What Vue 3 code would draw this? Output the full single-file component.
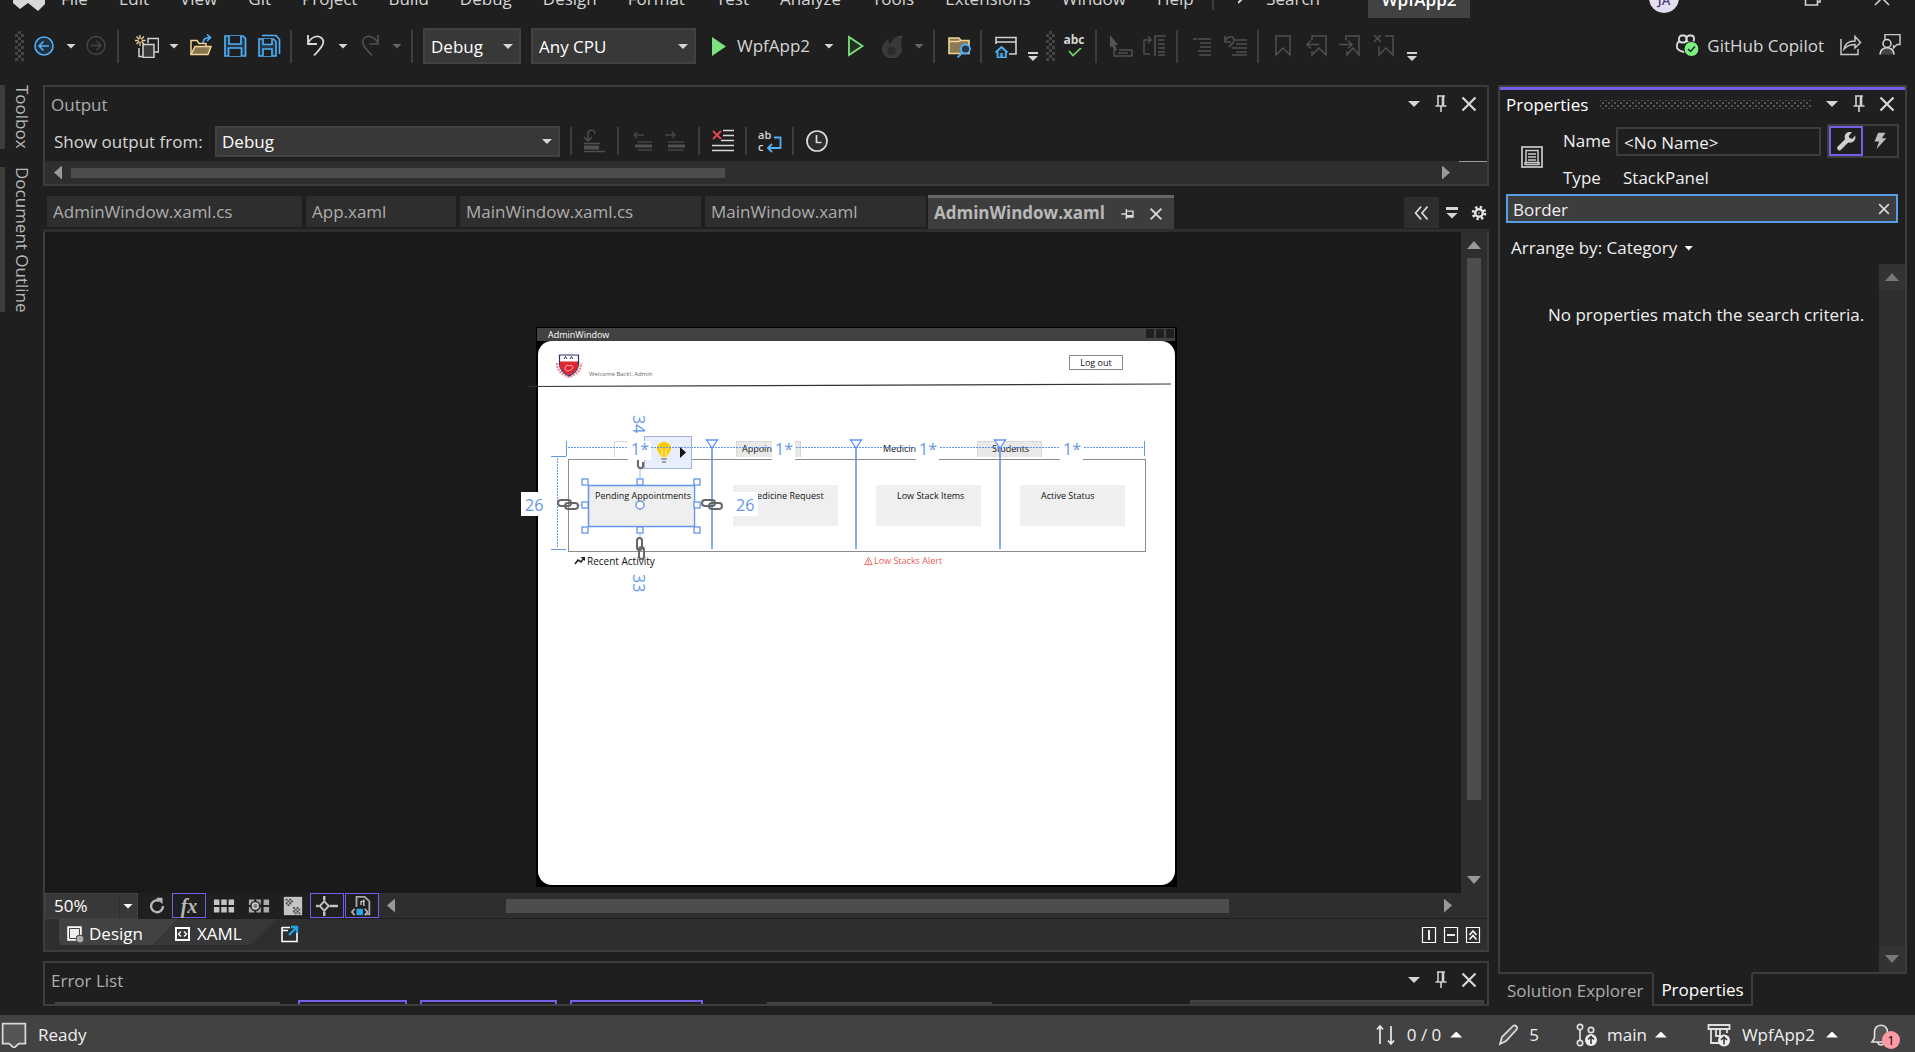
<script setup>
import { ref } from 'vue'

const menus = ['File', 'Edit', 'View', 'Git', 'Project', 'Build', 'Debug', 'Design', 'Format', 'Test', 'Analyze', 'Tools', 'Extensions', 'Window', 'Help']
const configuration = ref('Debug')
const platform = ref('Any CPU')
const outputSource = ref('Debug')
const zoomLevel = ref('50%')
const elementName = ref('<No Name>')
const propertySearch = ref('Border')

const icons = {
  back: '<g fill="none" stroke="#4fb0f8" stroke-width="1.6"><circle cx="12" cy="12" r="9" fill="#20303c"/><path d="M17 12H7.500M11.500 7.500L7 12l4.500 4.500"/></g>',
  forward: '<g fill="none" stroke="#464646" stroke-width="1.400"><circle cx="12" cy="11.500" r="9"/><path d="M7 11.500h9.500M12.500 7L17 11.500 12.500 16"/></g>',
  create: '<g fill="none" stroke="#d2d2d2" stroke-width="1.500"><path d="M13 9V4.500h10.500V18H19"/><path d="M4 14v8.500h3.500"/><rect x="8" y="10.500" width="11" height="13" fill="#3a3a3a"/></g><path d="M5 1v11M0 6.500h10.500M1.500 2.500l7.500 7.500M9 2.500L1.500 10" stroke="#f3d592" stroke-width="1.300"/><circle cx="5.200" cy="6.300" r="1.600" fill="#1f1f1f"/>',
  open: '<g fill="none" stroke="#f3d592" stroke-width="1.500"><path d="M2 20V6.500h6l2 3h7v4"/><path d="M2 20.500l4-8h16l-3 8z" fill="#877650"/></g><path d="M14 9c0-4 3-5.500 7-5.500M18 .500l3.500 3-3.500 3.500" fill="none" stroke="#4fb0f8" stroke-width="1.600"/>',
  save: '<g fill="none" stroke="#4fb0f8" stroke-width="1.700"><path d="M2 2h18l2.500 2.500V22H2z" fill="#243845"/><path d="M6 2v8h12V2M5.500 22v-8h13v8" fill="#1f1f1f"/></g>',
  saveAll: '<g fill="none" stroke="#4fb0f8" stroke-width="1.600"><path d="M5 1.500h14l3.500 4V20"/><path d="M2 5h14.500L19 7.500V22H2z" fill="#243845"/><path d="M6 5v5.500h9V5M6 22v-7h9v7" fill="#1f1f1f"/></g>',
  undo: '<path d="M4 1v9h9M4 9c4-7 10-8 13.500-5C22 8 18 13 10 21.500" fill="none" stroke="#d8d8d8" stroke-width="1.800"/>',
  redo: '<path d="M20 1v9h-9M20 9c-4-7-10-8-13.500-5C2 8 6 13 14 21.500" fill="none" stroke="#505050" stroke-width="1.600"/>',
  play: '<path d="M4 3l14 9.500L4 22z" fill="#7ce27c"/>',
  playOutline: '<path d="M5 3l13.500 9L5 21z" fill="#233323" stroke="#7ce27c" stroke-width="1.800"/>',
  flame: '<path d="M22 2C13 3 12 8 11 11 8 10 8 8 8 6 4 9 2 13 3 17c1 5 5 7 9 7 6 0 10-5 9-10 0-4-2-6 1-12z" fill="#383838" stroke="#444" stroke-width="1"/><circle cx="11.500" cy="17" r="4" fill="#2b2b2b"/>',
  folderSearch: '<path d="M2 19.500V4h10l2 2.500h8V19.500z" fill="#8a7a55" stroke="#f3d592" stroke-width="1.600"/><path d="M2 7.500h10l2-1.500" stroke="#f3d592" stroke-width="1.500" fill="none"/><circle cx="18.500" cy="15" r="4.500" fill="#243845" stroke="#4fb0f8" stroke-width="1.800"/><path d="M15.500 18.500l-5 5" stroke="#4fb0f8" stroke-width="1.800"/>',
  home: '<path d="M2 10V3.500h20V20h-7M2 8h20" fill="none" stroke="#d2d2d2" stroke-width="1.600"/><path d="M1.500 18.500l6-5.500 6 5.500M3.500 17v6.500h8.500V17" fill="#243845" stroke="#4fb0f8" stroke-width="1.700"/><path d="M7.500 23.500v-4.500" stroke="#4fb0f8" stroke-width="2"/>',
  check: '<path d="M7 3l4 4.500L19 0" fill="none" stroke="#6fd86f" stroke-width="1.700"/>',
  cursorBox: '<path d="M1 1l8 10H6l2 5-2 1-3-5-2 2z" fill="#555"/><path d="M5 15v7h18v-6H10M9 19h10" fill="none" stroke="#505050" stroke-width="1.500"/>',
  docArrow: '<path d="M7 20H1V6h6M5 2.500L8 6 5 9" fill="none" stroke="#505050" stroke-width="1.400"/><path d="M12 22V2h11M15 6h6M15 10h7M15 14h7M15 18h7M15 21h7" fill="none" stroke="#505050" stroke-width="1.600"/>',
  indent: '<path d="M3 5h4M8 5h13M10 9h11M10 13h11M8 17h13M9 21h12" stroke="#505050" stroke-width="1.600"/>',
  outdent: '<path d="M11 6h12M12 10h11M8 14h15M12 18h11M8 21h15" stroke="#505050" stroke-width="1.600"/><path d="M1 2v6h6M1 7c3-6 9-5 9-1s-4 5-5 7" fill="none" stroke="#505050" stroke-width="1.500"/>',
  bookmark: '<path d="M5 2h14v19l-7-7-7 7z" fill="none" stroke="#505050" stroke-width="1.500"/>',
  bookmarkPrev: '<path d="M7 6V2h14v19l-7-7-7 7v-4M14 10.500H2M6 6.500l-4 4 4 4" fill="none" stroke="#505050" stroke-width="1.500"/>',
  bookmarkNext: '<path d="M7 6V2h13v19l-6-7-6 7v-4M0 10.500h13M9 6.500l4 4-4 4" fill="none" stroke="#505050" stroke-width="1.500"/>',
  bookmarkClear: '<path d="M12 2h8v19l-7-7-7 7v-9M1 1l7 7M8 1L1 8" fill="none" stroke="#505050" stroke-width="1.500"/>',
  copilot: '<g fill="none" stroke="#dcdcdc" stroke-width="1.800"><rect x="4" y="1.500" width="7.500" height="7" rx="3"/><rect x="11.500" y="1.500" width="7.500" height="7" rx="3"/><path d="M4 7c-3 3-2 4-2 7 2 3 5 4 9 4"/></g><circle cx="16.500" cy="15" r="7.500" fill="#7df07d" stroke="#111" stroke-width="1"/><path d="M13 15l2.500 2.500 4.500-5" fill="none" stroke="#123" stroke-width="1.500"/>',
  share: '<path d="M2 5v15.500h17V15M5 15c1-6 5-8 11-8V2.500l5.500 6L16 14v-3.500c-5 0-8 1-11 4.500z" fill="none" stroke="#c8c8c8" stroke-width="1.500"/>',
  person: '<path d="M7 6V.500h15v10h-3l-3.500 3.500v-3" fill="none" stroke="#c8c8c8" stroke-width="1.500"/><circle cx="9" cy="9.500" r="4" fill="none" stroke="#dcdcdc" stroke-width="1.500"/><path d="M2 20.500c0-9 14-9 14 0" fill="#444" stroke="#dcdcdc" stroke-width="1.600"/>',
  goto: '<path d="M5 11V4c1-4 7-4 7 1M1 8l4 4 4-4" fill="none" stroke="#505050" stroke-width="1.400"/><path d="M1 14.500h16M1 22.500h21" stroke="#505050" stroke-width="1.400"/><rect x="1" y="16.500" width="15" height="4" fill="#505050"/>',
  prevMsg: '<path d="M14 6H4M7 3L4 6l3 3M8 13h14M8 21h14" fill="none" stroke="#454545" stroke-width="1.500"/><path d="M5 17h17" stroke="#505050" stroke-width="3"/>',
  nextMsg: '<path d="M1 6h10M8 3l3 3-3 3M4 13h16M4 21h16" fill="none" stroke="#454545" stroke-width="1.500"/><path d="M4 17h17" stroke="#505050" stroke-width="3"/>',
  clear: '<path d="M2 2l8 8M10 2l-8 8" stroke="#e5484d" stroke-width="1.800"/><path d="M12 1.500h11M12 6.500h11M10 11.500h13M1 16.500h22M1 21.500h22" stroke="#d8d8d8" stroke-width="1.600"/>',
  wrap: '<path d="M16 8.500h6.500V19H10M14 15l-4 4 4 4" fill="none" stroke="#4fb0f8" stroke-width="1.800"/>',
  clock: '<circle cx="12" cy="12" r="10" fill="#2d2d2d" stroke="#dcdcdc" stroke-width="1.700"/><path d="M11.500 6v7.500h5" fill="none" stroke="#dcdcdc" stroke-width="1.700"/>',
  pin: '<path d="M8 4h8M9 4v10M14.500 4v10M6.500 14h11M12 14v6M13.500 4v10" fill="none" stroke="#d0d0d0" stroke-width="1.600"/>',
  pinSide: '<path d="M4 12h6M10 6v12M10 8.500h8v7h-8M10 14h8" fill="none" stroke="#d8d8d8" stroke-width="1.700"/>',
  close: '<path d="M5.500 5.500l13 13M18.500 5.500l-13 13" stroke="#d8d8d8" stroke-width="2.200"/>',
  chevrons: '<path d="M11 5l-6 7 6 7M18 5l-6 7 6 7" fill="none" stroke="#d8d8d8" stroke-width="1.900"/>',
  gear: '<circle cx="12" cy="12" r="4.500" fill="none" stroke="#e0e0e0" stroke-width="3"/><circle cx="12" cy="12" r="7" fill="none" stroke="#e0e0e0" stroke-width="3.500" stroke-dasharray="2.800 2.700"/><circle cx="12" cy="12" r="1" fill="#e0e0e0"/>',
  refresh: '<path d="M15 6.500A6.500 6.500 0 1 0 18.500 12" fill="none" stroke="#b8b8b8" stroke-width="2.600"/><path d="M11 3h7v7z" fill="#b8b8b8"/>',
  grid: '<path d="M1 5h6v6H1zM9 5h6v6H9zM17 5h6v6h-6zM1 13h6v6H1zM9 13h6v6H9zM17 13h6v6h-6z" fill="#c4c4c4"/>',
  snap: '<path d="M1 5h6v6H1zM9 5h5v6H9zM17 5h6v6h-6zM1 13h6v6H1zM9 13h5v6H9zM17 13h6v6h-6z" fill="#aaa"/><circle cx="8" cy="12" r="5" fill="#777" stroke="#222" stroke-width="1.500"/><circle cx="8" cy="12" r="3" fill="none" stroke="#ccc" stroke-width="1.500"/>',
  checker: '<path d="M2 2h20v20H2z" fill="#c4c4c4"/><path d="M4 4h2v2H4zM8 4h2v2H8zM6 6h2v2H6zM4 8h2v2H4zM8 8h2v2H8zM10 6h2v2h-2zM6 10h2v2H6zM12 13h2v2h-2zM16 13h2v2h-2zM14 15h2v2h-2zM18 15h2v2h-2zM12 17h2v2h-2zM16 17h2v2h-2zM14 19h2v2h-2zM18 19h2v2h-2z" fill="#444"/>',
  snapLine: '<path d="M9 1v5M9 18v5M0 12h3M15 12h9" stroke="#c4c4c4" stroke-width="2.600"/><path d="M9 7l5 5-5 5-5-5z" fill="#222" stroke="#c4c4c4" stroke-width="2"/>',
  docSnap: '<path d="M6 13V2h9l5 5v14h-3" fill="none" stroke="#aaa" stroke-width="2"/><path d="M11 11V7h4M14 5v7" fill="none" stroke="#ccc" stroke-width="1.500"/><path d="M6 15h7v7H6z" fill="#2ba7e8"/><path d="M4 15l-3 3.500L4 22M15 15l3 3.500-3 3.500" fill="none" stroke="#bbb" stroke-width="1.800"/>',
  design: '<path d="M5 5h13v13H5z" fill="#eee" stroke="#fff" stroke-width="1.500"/><path d="M6.500 6.500h10v10h-10z" fill="none" stroke="#424242"/><circle cx="17" cy="17" r="4" fill="#aaa" stroke="#424242"/>',
  xaml: '<path d="M5 6h13v12H5z" fill="none" stroke="#fff" stroke-width="2"/><path d="M10 9.500L7.500 12l2.500 2.500M13 9.500l2.500 2.500-2.500 2.500" fill="none" stroke="#fff" stroke-width="1.300"/>',
  popout: '<path d="M4 5v14.500h15V11M4 5.500h8M4 8.500h6" fill="none" stroke="#fff" stroke-width="1.600"/><path d="M11 13l7-7M13 5h6v6" fill="none" stroke="#1fa3e8" stroke-width="2.400"/>',
  splitV: '<path d="M5.500 4.500h13v15h-13z" fill="none" stroke="#fff" stroke-width="1.200"/><path d="M12 7v10" stroke="#fff" stroke-width="1.800"/>',
  splitH: '<path d="M5.500 4.500h13v15h-13z" fill="none" stroke="#fff" stroke-width="1.200"/><path d="M8 12h8" stroke="#fff" stroke-width="1.800"/>',
  collapse: '<path d="M5.500 4.500h13v15h-13z" fill="none" stroke="#fff" stroke-width="1.200"/><path d="M8.500 12L12 8l3.500 4M8.500 16.500l3.500-4 3.500 4" fill="none" stroke="#fff" stroke-width="1.600"/>',
  stack: '<path d="M2 2h20v20H2z" fill="none" stroke="#b0b0b0" stroke-width="2"/><path d="M6 5.500h12v12H6zM8 9h8M8 12h8M8 15h8M5 19.500h14M5 17v3M19 17v3" fill="none" stroke="#c8c8c8" stroke-width="1.500"/>',
  wrench: '<path d="M3 18L11 10C9 4 14 1 18.500 2.500l-3.500 4 1 2.500 3 .500 3-3.500c1.500 5-3 9-7.500 7.500L6 22c-2 1.500-5-2-3-4z" fill="#cfcfcf"/>',
  bolt: '<path d="M10 3h8l-4 6h5L8 21l3-8.500H6z" fill="#bdbdbd"/>',
  message: '<path d="M1.500 1.500h21V20h-6l-4.500 4-4.500-4h-6z" fill="#555" stroke="#d8d8d8" stroke-width="1.600"/>',
  arrows: '<path d="M6 21V3M3 6.500L6 3l3 3.500M17 3v18M14 17.500l3 3.500 3-3.500" fill="none" stroke="#e8e8e8" stroke-width="1.700"/>',
  pencil: '<path d="M4 21l2-7L17 3c2-2 5 1 4 3L10 18z" fill="#555" stroke="#e0e0e0" stroke-width="1.700"/>',
  branch: '<g fill="none" stroke="#e0e0e0" stroke-width="1.700"><circle cx="5" cy="4" r="2.700"/><circle cx="5" cy="20" r="2.700"/><path d="M5 7v10"/><circle cx="16" cy="7" r="2.700"/></g><circle cx="16" cy="17" r="6" fill="#eee"/><path d="M16 21v-7M13 16.500l3-3 3 3" fill="none" stroke="#333" stroke-width="1.500"/>',
  repo: '<path d="M1.500 2h21v4h-21zM4 6v14h8M20 6v4M9 6v7h4V6" fill="none" stroke="#e0e0e0" stroke-width="1.800"/><circle cx="17" cy="17.500" r="6" fill="#eee"/><path d="M17 21.500v-7M14 17l3-3 3 3" fill="none" stroke="#333" stroke-width="1.500"/>',
  bell: '<path d="M3 19l2.500-4V9c0-9 13-9 13 0v6l2.500 4zM9 19c0 4 6 4 6 0" fill="#555" stroke="#e0e0e0" stroke-width="1.600"/>',
  vs: '<path d="M0 8l6-3 9 8 10-10 7 4v16l-7 7-10-8-8 6-7-6z" fill="#d8d8d8"/>',
}

const fileTools = ['open', 'save', 'saveAll']
const bookmarkTools = ['bookmark', 'bookmarkPrev', 'bookmarkNext', 'bookmarkClear']
const tabs = [
  { name: 'AdminWindow.xaml.cs', size: 'w1' },
  { name: 'App.xaml', size: 'w2' },
  { name: 'MainWindow.xaml.cs', size: 'w3' },
  { name: 'MainWindow.xaml', size: 'w4' },
]
const dividers = [176, 320, 464]
const handles = [
  [49, 155], [104, 155], [161, 155],
  [49, 178], [161, 178],
  [49, 203], [104, 203], [161, 203],
]
</script>

<template>
  <div class="ide">
    <header class="titlebar">
      <svg class="vs-logo" viewBox="0 0 32 32" v-html="icons.vs"></svg>
      <nav class="menu">
        <a v-for="m in menus" :key="m" href="#">{{ m }}</a>
      </nav>
      <i class="menu-sep"></i>
      <button class="search-btn">
        <svg width="12" height="24" viewBox="0 0 12 24"><path d="M0 16l6-6" stroke="#d0d0d0" stroke-width="2" /></svg>
        Search
      </button>
      <span class="solution">WpfApp2</span>
      <span class="avatar">JA</span>
      <button class="win" aria-label="Restore"><svg width="18" height="24" viewBox="0 0 18 24"><path d="M1.500 4v13h12V4M14 14h2V6" fill="none" stroke="#d0d0d0" stroke-width="1.600" /></svg></button>
      <button class="win last" aria-label="Close"><svg width="18" height="24" viewBox="0 0 18 24"><path d="M2 17L16 3M16 17L2 3" stroke="#d0d0d0" stroke-width="1.600" /></svg></button>
    </header>

    <div class="toolbar">
      <i class="grip"></i>
      <button class="ic near" aria-label="Back"><svg viewBox="0 0 24 24" v-html="icons.back"></svg></button>
      <i class="caret"></i>
      <button class="ic near" aria-label="Forward"><svg viewBox="0 0 24 24" v-html="icons.forward"></svg></button>
      <i class="sep"></i>
      <button class="ic create" aria-label="New"><svg viewBox="0 0 24 24" v-html="icons.create"></svg></button>
      <i class="caret"></i>
      <button v-for="t in fileTools" :key="t" class="ic" :aria-label="t"><svg viewBox="0 0 24 24" v-html="icons[t]"></svg></button>
      <i class="sep"></i>
      <button class="ic far" aria-label="Undo"><svg viewBox="0 0 24 24" v-html="icons.undo"></svg></button>
      <i class="caret"></i>
      <button class="ic" aria-label="Redo"><svg viewBox="0 0 24 24" v-html="icons.redo"></svg></button>
      <i class="caret dim"></i>
      <i class="sep"></i>
      <span class="combo config"><select v-model="configuration" aria-label="Configuration"><option>Debug</option><option>Release</option></select></span>
      <span class="combo platform"><select v-model="platform" aria-label="Platform"><option>Any CPU</option></select></span>
      <button class="ic far" aria-label="Start"><svg viewBox="0 0 24 24" v-html="icons.play"></svg></button>
      <button class="run-label">WpfApp2</button>
      <i class="caret"></i>
      <button class="ic" aria-label="Start without debugging"><svg viewBox="0 0 24 24" v-html="icons.playOutline"></svg></button>
      <button class="ic far" aria-label="Hot reload"><svg viewBox="0 0 24 24" v-html="icons.flame"></svg></button>
      <i class="caret dim"></i>
      <i class="sep"></i>
      <button class="ic far" aria-label="Find in files"><svg viewBox="0 0 24 24" v-html="icons.folderSearch"></svg></button>
      <i class="sep"></i>
      <button class="ic far" aria-label="Start window"><svg viewBox="0 0 24 24" v-html="icons.home"></svg></button>
      <i class="overflow"></i>
      <i class="grip near"></i>
      <button class="ic abc"><span>abc</span><svg viewBox="0 0 24 10" v-html="icons.check"></svg></button>
      <i class="sep"></i>
      <button class="ic far" aria-label="Select element"><svg viewBox="0 0 24 24" v-html="icons.cursorBox"></svg></button>
      <button class="ic" aria-label="Document map"><svg viewBox="0 0 24 24" v-html="icons.docArrow"></svg></button>
      <i class="sep"></i>
      <button class="ic far" aria-label="Indent"><svg viewBox="0 0 24 24" v-html="icons.indent"></svg></button>
      <button class="ic" aria-label="Outdent"><svg viewBox="0 0 24 24" v-html="icons.outdent"></svg></button>
      <i class="sep"></i>
      <i class="pad"></i>
      <button v-for="b in bookmarkTools" :key="b" class="ic" :aria-label="b"><svg viewBox="0 0 24 24" v-html="icons[b]"></svg></button>
      <i class="overflow"></i>
      <div class="account">
        <button class="copilot"><svg viewBox="0 0 24 24" v-html="icons.copilot"></svg>GitHub Copilot</button>
        <button class="ic" aria-label="Share"><svg viewBox="0 0 24 24" v-html="icons.share"></svg></button>
        <button class="ic" aria-label="Feedback"><svg viewBox="0 0 24 24" v-html="icons.person"></svg></button>
      </div>
    </div>

    <main class="work">
      <aside class="rail">
        <button>Toolbox</button>
        <button>Document Outline</button>
      </aside>

      <div class="center">
        <section class="panel output">
          <div class="panel-title">
            <h2>Output</h2>
            <div class="panel-tools">
              <i class="caret big"></i>
              <button aria-label="Pin"><svg viewBox="0 0 24 24" v-html="icons.pin"></svg></button>
              <button aria-label="Close"><svg viewBox="0 0 24 24" v-html="icons.close"></svg></button>
            </div>
          </div>
          <div class="output-bar">
            <label for="source">Show output from:</label>
            <span class="combo source"><select id="source" v-model="outputSource"><option>Debug</option><option>Build</option></select></span>
            <i class="sep"></i>
            <button class="ic" aria-label="Go to message"><svg viewBox="0 0 24 24" v-html="icons.goto"></svg></button>
            <i class="sep"></i>
            <button class="ic" aria-label="Previous message"><svg viewBox="0 0 24 24" v-html="icons.prevMsg"></svg></button>
            <button class="ic" aria-label="Next message"><svg viewBox="0 0 24 24" v-html="icons.nextMsg"></svg></button>
            <i class="sep"></i>
            <button class="ic" aria-label="Clear all"><svg viewBox="0 0 24 24" v-html="icons.clear"></svg></button>
            <i class="sep"></i>
            <button class="ic wrapbtn"><span>ab</span><span>c</span><svg viewBox="0 0 24 24" v-html="icons.wrap"></svg></button>
            <i class="sep"></i>
            <button class="ic" aria-label="Timestamps"><svg viewBox="0 0 24 24" v-html="icons.clock"></svg></button>
          </div>
          <div class="hscroll">
            <i class="tri to-left"></i>
            <div class="track"><i class="thumb"></i></div>
            <i class="tri to-right"></i>
            <i class="corner"></i>
          </div>
        </section>

        <div class="tabs">
          <button v-for="t in tabs" :key="t.name" class="tab" :class="t.size">{{ t.name }}</button>
          <div class="tab active">
            <b>AdminWindow.xaml</b>
            <button aria-label="Pin tab"><svg viewBox="0 0 24 24" v-html="icons.pinSide"></svg></button>
            <button aria-label="Close tab"><svg viewBox="0 0 24 24" v-html="icons.close"></svg></button>
          </div>
          <div class="tab-tools">
            <button class="more" aria-label="More tabs"><svg viewBox="0 0 24 24" v-html="icons.chevrons"></svg></button>
            <i class="overflow tabflow"></i>
            <button class="gear" aria-label="Tab settings"><svg viewBox="0 0 24 24" v-html="icons.gear"></svg></button>
          </div>
        </div>

        <section class="editor">
          <div class="stage">
            <div class="canvas">
              <div class="artboard">
                <div class="art-title">AdminWindow<span class="boxes"><i></i><i></i><i></i></span></div>
                <div class="art-page"></div>
                <svg class="crest" viewBox="0 0 26 24">
                  <path d="M1 9c0 7 4 11 12 14 8-3 12-7 12-14" fill="none" stroke="#e98b91" stroke-width="2.500" stroke-dasharray="2 1" />
                  <path d="M3.500 1h19v9c0 5-4 9-9.500 12C7.500 19 3.500 15 3.500 10z" fill="#fff" stroke="#26336b" stroke-width="1.200" />
                  <path d="M4 7.500h18V11c0 4-4 7.500-9 10.500C8 18.500 4 15 4 11z" fill="#e0242f" />
                  <path d="M8 5l1.500-2.500L11 5M14 5l1.500-2.500L17 5" fill="none" stroke="#26336b" />
                  <path d="M9 15c0-3 2-5 4-3 3-2 5 1 3 3s-6 3-7 0z" fill="none" stroke="#ffb9bd" stroke-width="1" />
                </svg>
                <span class="welcome">Welcome Back!, Admin</span>
                <button class="logout">Log out</button>

                <span class="chip first"></span>
                <span class="chip appoint">Appoin</span>
                <span class="chip medicine">Medicine</span>
                <span class="chip students">Students</span>

                <div class="card c1">Pending Appointments</div>
                <div class="card c2">Medicine Request</div>
                <div class="card c3">Low Stack Items</div>
                <div class="card c4">Active Status</div>

                <span class="section recent">
                  <svg viewBox="0 0 12 10"><path d="M1 8l3-4 3 2 3-4" fill="none" stroke="#222" stroke-width="1.600" /><path d="M6.500 1h4.500v4z" fill="#222" /></svg>
                  Recent Activity
                </span>
                <span class="section alert">
                  <svg viewBox="0 0 10 10"><path d="M5 1l4.200 8H.8z" fill="none" stroke="#f05a5a" /><path d="M5 4v2.500M5 7.200v1" stroke="#f05a5a" /></svg>
                  Low Stacks Alert
                </span>

                <svg class="adorner" viewBox="-30 0 700 300">
                  <path d="M-9 59.500L635 57" stroke="#333" stroke-width="1.200" />
                  <rect x="32.500" y="132.500" width="577" height="92" fill="none" stroke="#8c8c8c" />
                  <g stroke="#6495ed" fill="none">
                    <path d="M30.500 114v15M15 129.500h15M15 222.500h15M608.500 114v15" />
                    <path d="M32 120.500H607M21.500 131v90" stroke-dasharray="2 1" stroke-width="1" />
                    <path d="M43 178h6M104 142v10M104 206v5M161 178h6" stroke="#9dbcf5" />
                    <g v-for="x in dividers" :key="x">
                      <path :d="`M${x} 121v101`" stroke-width="1.600" />
                      <path :d="`M${x - 5.5} 113h11l-5.500 8z`" fill="#fff" stroke-width="1.300" />
                    </g>
                  </g>
                  <g fill="none" stroke="#666" stroke-width="2">
                    <g v-for="x in [32, 176]" :key="x">
                      <rect :x="x - 10" y="173" width="13" height="6" rx="3" />
                      <rect :x="x - 3" y="176" width="13" height="6" rx="3" />
                    </g>
                    <rect x="101" y="211" width="5" height="12" rx="2.500" />
                    <rect x="103" y="220" width="5" height="12" rx="2.500" />
                    <path d="M102 132v7c1 3 5 3 5 0v-4" />
                  </g>
                  <g fill="#fff" stroke="#6495ed">
                    <rect x="52.500" y="158.500" width="106" height="41" fill="none" stroke-width="1.500" />
                    <rect v-for="(h, i) in handles" :key="i" :x="h[0] - 3" :y="h[1] - 3" width="6" height="6" stroke-width="1.300" />
                    <circle cx="104" cy="178" r="4" stroke-width="1.500" />
                  </g>
                </svg>

                <button class="hint" aria-label="Suggested actions">
                  <svg viewBox="0 0 46 31">
                    <path d="M19 5c-7 0-9 7-5 11l2 4h6l2-4c4-4 2-11-5-11z" fill="#ffcb0a" />
                    <path d="M17 20v-7l-1.500-2M21 20v-7l1.500-2" fill="none" stroke="#fff3b8" />
                    <path d="M16 22h6M17 25h4" stroke="#888" stroke-width="1.500" />
                    <path d="M0 10.500h46" stroke="#6495ed" stroke-dasharray="2 1" />
                    <path d="M35 10l6 5.500-6 5.500z" fill="#111" />
                  </svg>
                </button>
                <span class="star s1">1*</span>
                <span class="star s2">1*</span>
                <span class="star s3">1*</span>
                <span class="star s4">1*</span>
                <span class="margin ml">26</span>
                <span class="margin mr">26</span>
                <span class="margin vert mt">34</span>
                <span class="margin vert mb">33</span>
              </div>
            </div>
            <div class="vscroll"><i class="tri to-up"></i><div class="track"><i class="thumb"></i></div><i class="tri to-down"></i></div>
          </div>

          <div class="zoombar">
            <span class="combo zoom"><select v-model="zoomLevel" aria-label="Zoom"><option>50%</option><option>100%</option></select></span>
            <button class="cell" aria-label="Refresh"><svg viewBox="0 0 24 24" v-html="icons.refresh"></svg></button>
            <button class="cell on fx">fx</button>
            <button class="cell" aria-label="Grid"><svg viewBox="0 0 24 24" v-html="icons.grid"></svg></button>
            <button class="cell" aria-label="Snap to grid"><svg viewBox="0 0 24 24" v-html="icons.snap"></svg></button>
            <button class="cell tight" aria-label="Background"><svg viewBox="0 0 24 24" v-html="icons.checker"></svg></button>
            <button class="cell tight on" aria-label="Snap to lines"><svg viewBox="0 0 24 24" v-html="icons.snapLine"></svg></button>
            <button class="cell on" aria-label="Project code"><svg viewBox="0 0 24 24" v-html="icons.docSnap"></svg></button>
            <div class="hbar"><i class="tri to-left"></i><div class="track"><i class="thumb"></i></div><i class="tri to-right"></i></div>
          </div>

          <div class="viewbar">
            <button class="view design"><svg viewBox="0 0 24 24" v-html="icons.design"></svg>Design</button>
            <button class="view xaml"><svg viewBox="0 0 24 24" v-html="icons.xaml"></svg>XAML</button>
            <button class="popout" aria-label="Pop out"><svg viewBox="0 0 24 24" v-html="icons.popout"></svg></button>
            <div class="splits">
              <button aria-label="Vertical split"><svg viewBox="0 0 24 24" v-html="icons.splitV"></svg></button>
              <button aria-label="Horizontal split"><svg viewBox="0 0 24 24" v-html="icons.splitH"></svg></button>
              <button aria-label="Collapse pane"><svg viewBox="0 0 24 24" v-html="icons.collapse"></svg></button>
            </div>
          </div>
        </section>

        <section class="panel errors">
          <div class="panel-title">
            <h2>Error List</h2>
            <div class="panel-tools">
              <i class="caret big"></i>
              <button aria-label="Pin"><svg viewBox="0 0 24 24" v-html="icons.pin"></svg></button>
              <button aria-label="Close"><svg viewBox="0 0 24 24" v-html="icons.close"></svg></button>
            </div>
          </div>
          <div class="error-bar">
            <button class="filter wide" aria-label="Scope"></button>
            <button class="filter e1" aria-label="Errors"></button>
            <button class="filter e2" aria-label="Warnings"></button>
            <button class="filter e3" aria-label="Messages"></button>
            <button class="filter wide build" aria-label="Build source"></button>
            <input class="error-search" aria-label="Search error list" />
          </div>
        </section>
      </div>

      <div class="side">
        <section class="props">
          <div class="panel-title">
            <h2>Properties</h2>
            <i class="dots"></i>
            <div class="panel-tools">
              <i class="caret big"></i>
              <button aria-label="Pin"><svg viewBox="0 0 24 24" v-html="icons.pin"></svg></button>
              <button aria-label="Close"><svg viewBox="0 0 24 24" v-html="icons.close"></svg></button>
            </div>
          </div>
          <div class="identity">
            <svg class="kind" viewBox="0 0 24 24" v-html="icons.stack"></svg>
            <div class="fields">
              <div class="field">
                <label for="el-name">Name</label>
                <input id="el-name" v-model="elementName" />
                <div class="modes">
                  <button class="on" aria-label="Properties"><svg viewBox="0 0 24 24" v-html="icons.wrench"></svg></button>
                  <button aria-label="Events"><svg viewBox="0 0 24 24" v-html="icons.bolt"></svg></button>
                </div>
              </div>
              <div class="field type"><span>Type</span><span>StackPanel</span></div>
            </div>
          </div>
          <div class="find">
            <input v-model="propertySearch" aria-label="Search properties" />
            <button aria-label="Clear search"><svg viewBox="0 0 24 24" v-html="icons.close"></svg></button>
          </div>
          <button class="arrange">Arrange by: Category<i class="caret"></i></button>
          <div class="result">
            <p>No properties match the search criteria.</p>
            <div class="pscroll"><span><i class="tri to-up"></i></span><span><i class="tri to-down"></i></span></div>
          </div>
        </section>
        <div class="dock">
          <button>Solution Explorer</button>
          <button class="on">Properties</button>
        </div>
      </div>
    </main>

    <footer class="status">
      <svg class="msg" viewBox="0 0 24 24" v-html="icons.message"></svg>
      <span class="ready">Ready</span>
      <button class="git"><svg viewBox="0 0 24 24" v-html="icons.arrows"></svg>0 / 0<i class="caret upc"></i></button>
      <button class="edits"><svg viewBox="0 0 24 24" v-html="icons.pencil"></svg>5</button>
      <button class="branch"><svg viewBox="0 0 24 24" v-html="icons.branch"></svg>main<i class="caret upc"></i></button>
      <button class="repo"><svg viewBox="0 0 24 24" v-html="icons.repo"></svg>WpfApp2<i class="caret upc"></i></button>
      <button class="bell"><svg viewBox="0 0 24 24" v-html="icons.bell"></svg><span>1</span></button>
    </footer>
  </div>
</template>

<style>
body { margin: 0; background: #1f1f1f; }
</style>

<style scoped>
.ide, .ide * { box-sizing: border-box; }
.ide { display: flex; flex-direction: column; height: 100vh; overflow: hidden; background: #1f1f1f; color: #d6d6d6; font-family: "Open Sans", "Noto Sans", sans-serif; font-size: 17px; line-height: 24px; }
button, input, select { font: inherit; color: inherit; background: none; border: 0; padding: 0; margin: 0; border-radius: 0; white-space: nowrap; }
select { appearance: none; width: 100%; height: 100%; color: #fff; padding-top: 2px; }
svg { display: block; flex: none; }
i { display: block; flex: none; }
h2 { margin: 0; padding-top: 2px; font-size: 17px; font-weight: 400; color: #adadad; }

/* title bar: its upper half lies above the window edge */
.titlebar { display: flex; align-items: flex-start; height: 28px; overflow: hidden; flex: none; padding-left: 13px; }
.vs-logo { width: 32px; height: 32px; margin-top: -19px; margin-right: 16px; }
.menu { display: flex; gap: 31px; margin-top: -13px; }
.menu a { color: #d6d6d6; text-decoration: none; white-space: nowrap; }
.menu-sep { width: 2px; height: 10px; background: #3d3d3d; margin-left: auto; }
.search-btn { display: flex; margin: -13px 48px 0 24px; gap: 16px; }
.solution { height: 18px; width: 102px; background: #424242; color: #fff; font-weight: 600; text-align: center; line-height: 0; }
.avatar { width: 30px; height: 30px; margin: -17px 125px 0 179px; border-radius: 50%; background: #e4dff0; color: #4b3f72; font-size: 13px; font-weight: 600; line-height: 34px; text-align: center; }
.win { margin-top: -12px; margin-right: 51px; }
.win.last { margin-right: 24px; }

.toolbar { display: flex; align-items: center; height: 36px; flex: none; padding-left: 15px; padding-right: 13px; }
.toolbar > * { margin-left: 10px; }
.toolbar > .grip:first-child { margin-left: 0; }
.grip { width: 9px; height: 30px; background: conic-gradient(#6a6a6a 25%, transparent 0) 0 0 / 6px 6px, conic-gradient(#6a6a6a 25%, transparent 0) 3px 3px / 6px 6px; opacity: .5; }
.ic { width: 24px; height: 24px; flex: none; }
.toolbar > .near { margin-left: 8px; }
.toolbar > .far { margin-left: 12px; }
.toolbar > .create { margin-left: 16px; }
.sep { width: 2px; height: 33px; background: #3d3d3d; }
.toolbar > .sep { margin-left: 9px; }
.toolbar > .pad { margin-left: 0; width: 2px; }
.caret { width: 10px; height: 5px; background: #d6d6d6; clip-path: polygon(0 0, 100% 0, 50% 100%); }
.caret.dim { background: #666; }
.caret.big { width: 12px; height: 6px; }
.caret.upc { width: 12px; height: 6px; background: #fff; clip-path: polygon(50% 0, 100% 100%, 0 100%); }
.combo { position: relative; background: #383838; border: 2px solid #424242; height: 36px; flex: none; }
.combo select { padding-left: 6px; }
.combo::after { content: ""; position: absolute; right: 6px; top: 50%; width: 10px; height: 5px; margin-top: -2px; background: #d6d6d6; clip-path: polygon(0 0, 100% 0, 50% 100%); pointer-events: none; }
.config { width: 98px; }
.platform { width: 165px; }
.run-label { width: 77px; text-align: left; }
.toolbar > .run-label { margin-left: 5px; }
.overflow { width: 10px; height: 9px; align-self: flex-end; margin-bottom: 3px; background: linear-gradient(#d6d6d6, #d6d6d6) 0 0 / 100% 2px no-repeat; position: relative; }
.overflow::after { content: ""; position: absolute; left: 0; bottom: 0; width: 10px; height: 5px; background: #d6d6d6; clip-path: polygon(0 0, 100% 0, 50% 100%); }
.abc { display: flex; flex-direction: column; align-items: center; font-size: 12px; font-weight: 700; line-height: 12px; height: 24px; }
.toolbar > .abc { margin-left: 7px; }
.abc svg { width: 24px; height: 10px; margin-top: 2px; }
.toolbar > .account { margin-left: auto; display: flex; align-items: center; }
.copilot { display: flex; align-items: center; gap: 8px; }
.copilot svg { width: 24px; height: 24px; }
.account .ic { margin-left: 15px; }

.work { display: flex; flex: 1; min-height: 0; margin-top: 21px; }
.rail { width: 43px; flex: none; display: flex; flex-direction: column; gap: 18px; align-items: flex-start; }
.rail button { writing-mode: vertical-rl; border-left: 5px solid #3d3d3d; width: 34px; padding: 0 0 0 5px; line-height: 24px; color: #b8b8b8; }
.center { flex: 1; min-width: 0; display: flex; flex-direction: column; }
.panel { border: 2px solid #3d3d3d; flex: none; }
.panel-title { display: flex; align-items: center; height: 34px; padding-left: 6px; }
.panel-tools { margin-left: auto; display: flex; align-items: center; padding-right: 6px; }
.panel-tools button { width: 24px; height: 24px; margin-left: 4px; }
.panel-tools .caret { margin-right: 5px; }
.output { height: 101px; }
.output-bar { display: flex; align-items: center; height: 40px; padding: 0 0 0 9px; gap: 10px; }
.output-bar label { width: 151px; white-space: nowrap; padding-top: 2px; }
.output-bar .source { width: 345px; height: 31px; }
.output-bar .source select { padding-left: 5px; }
.output-bar .sep { height: 28px; margin-right: 1px; }
.wrapbtn { position: relative; display: grid; font-size: 11px; font-weight: 600; line-height: 11px; text-align: left; }
.wrapbtn svg { position: absolute; inset: 0; }
.hscroll { display: flex; align-items: center; height: 23px; background: #2e2e2e; position: relative; padding: 0 37px 0 9px; }
.hscroll .track { flex: 1; margin: 0 9px; }
.hscroll .thumb { width: 48%; height: 10px; background: #4d4d4d; }
.corner { position: absolute; right: 0; top: 0; width: 28px; height: 1px; background: #999; }
.tri { background: #999; }
.to-left { width: 8px; height: 14px; clip-path: polygon(0 50%, 100% 0, 100% 100%); }
.to-right { width: 8px; height: 14px; clip-path: polygon(0 0, 100% 50%, 0 100%); }
.to-up { width: 14px; height: 8px; clip-path: polygon(50% 0, 100% 100%, 0 100%); }
.to-down { width: 14px; height: 8px; clip-path: polygon(0 0, 100% 0, 50% 100%); }

.tabs { display: flex; align-items: flex-end; height: 46px; padding-left: 4px; padding-bottom: 1px; border-bottom: 3px solid #2e2e2e; flex: none; }
.tab { height: 31px; background: #2e2e2e; color: #adadad; text-align: left; padding: 0 6px; margin-right: 4px; flex: none; margin-bottom: 1px; }
.w1 { width: 255px; }
.w2 { width: 150px; }
.w3 { width: 241px; }
.w4 { width: 221px; margin-right: 2px; }
.tab.active { display: flex; align-items: center; height: 34px; width: 246px; padding-right: 8px; margin-bottom: -1px; border-top: 3px solid #666; background: #3d3d3d; color: #b8b8b8; }
.tab.active b { flex: 1; font-weight: 700; white-space: nowrap; padding-bottom: 2px; }
.tab.active button { width: 20px; height: 20px; margin-left: 8px; }
.tab-tools { margin-left: auto; display: flex; align-items: center; }
.more { width: 35px; height: 31px; background: #2e2e2e; display: grid; place-items: center; }
.more svg { width: 22px; height: 22px; }
.overflow.tabflow { align-self: center; margin: 0 11px 0 7px; width: 12px; height: 12px; background-size: 100% 3px; }
.overflow.tabflow::after { width: 12px; height: 6px; }
.gear { width: 20px; height: 20px; }

.editor { flex: 1; min-height: 0; display: flex; flex-direction: column; border: 2px solid #3d3d3d; border-top: 0; }
.stage { flex: 1; min-height: 0; display: flex; }
.canvas { flex: 1; position: relative; background: #1a1a1a; overflow: hidden; }
.vscroll { width: 26px; background: #2e2e2e; display: flex; flex-direction: column; align-items: center; padding: 9px 0; }
.vscroll .track { flex: 1; margin: 9px 0; }
.vscroll .thumb { width: 14px; height: 89%; background: #4d4d4d; }
.zoombar { height: 26px; flex: none; display: flex; align-items: center; background: #1f1f1f; border-bottom: 1px solid #1f1f1f; }
.zoom { width: 93px; height: 26px; border-width: 1px; }
.zoom select { padding-left: 8px; line-height: 22px; padding-top: 0; background: linear-gradient(#2e2e2e, #2e2e2e) 73px 0 / 1px 100% no-repeat; }
.zoom::after { right: 4px; background: #fff; }
.cell { width: 34px; height: 25px; margin-left: 1px; display: grid; place-items: center; flex: none; }
.cell.tight { margin-left: 0; }
.zoom + .cell { width: 32px; padding-left: 3px; }
.cell.on { border: 1px solid #7160e8; }
.fx { font-family: "Liberation Serif", serif; font-style: italic; font-weight: 700; font-size: 20px; line-height: 20px; color: #b8b8b8; }
.cell svg { width: 22px; height: 22px; }
.hbar { flex: 1; align-self: stretch; background: #2e2e2e; display: flex; align-items: center; padding: 0 35px 0 8px; }
.hbar .track { flex: 1; margin: 0 8px; }
.hbar .thumb { width: 70%; margin-left: 10%; height: 14px; background: #4d4d4d; }
.viewbar { height: 31px; flex: none; display: flex; align-items: flex-start; background: #2e2e2e; padding: 0 3px 0 14px; }
.view { display: flex; align-items: center; height: 26px; padding-top: 3px; color: #fff; gap: 2px; }
.view svg, .popout svg, .splits svg { width: 24px; height: 24px; }
.design { width: 119px; padding-left: 4px; background: #424242; clip-path: polygon(0 0, 100% 0, 94px 100%, 3px 100%, 0 23px); }
.xaml { width: 123px; margin-left: -25px; padding-left: 18px; background: #383838; clip-path: polygon(25px 0, 100% 0, 97px 100%, 0 100%); }
.popout { margin-left: 2px; margin-top: 3px; }
.splits { margin-left: auto; display: flex; margin-top: 4px; }
.splits button { width: 22px; height: 24px; }
.splits svg { margin-left: -1px; }

.errors { height: 45px; margin: 9px 0; overflow: hidden; }
.errors .panel-title { height: 34px; }
.error-bar { display: flex; height: 30px; margin-top: 3px; padding: 0 3px 0 10px; align-items: flex-start; }
.filter { height: 30px; border: 2px solid #7160e8; flex: none; margin-left: 13px; }
.filter.wide { width: 225px; border-color: #424242; margin-top: 2px; margin-left: 0; }
.filter.e1 { width: 109px; margin-left: 18px; }
.e2 { width: 137px; }
.e3 { width: 133px; }
.filter.build { margin-left: 64px; }
.error-search { width: 294px; height: 30px; margin-left: auto; background: #383838; border: 2px solid #424242; }

.side { width: 409px; margin: 0 8px 9px 9px; flex: none; display: flex; flex-direction: column; }
.props { flex: 1; min-height: 0; border: 2px solid #3d3d3d; display: flex; flex-direction: column; }
.props .panel-title { border-top: 3px solid #7160e8; height: 31px; flex: none; }
.props h2 { color: #fff; }
.dots { flex: 1; height: 9px; margin: 0 14px 0 12px; background: radial-gradient(circle, #666 1px, transparent 1px) 0 0 / 6px 6px, radial-gradient(circle, #666 1px, transparent 1px) 3px 3px / 6px 6px; opacity: .8; }
.identity { display: flex; height: 76px; padding: 5px 0 0 20px; flex: none; color: #f0f0f0; }
.kind { width: 24px; height: 24px; margin-top: 22px; }
.fields { flex: 1; min-width: 0; padding-left: 19px; }
.field { display: flex; align-items: center; height: 36px; }
.field label, .field.type span:first-child { width: 53px; flex: none; }
.field input { flex: 1; min-width: 0; height: 29px; border: 2px solid #3d3d3d; padding: 2px 6px 0; }
.field.type { height: 34px; gap: 7px; padding-top: 3px; }
.modes { display: flex; border: 2px solid #3d3d3d; height: 34px; width: 72px; margin: 0 6px; flex: none; }
.modes button { width: 34px; display: grid; place-items: center; }
.modes svg { width: 22px; height: 22px; }
.modes .on { border: 2px solid #7160e8; }
.find { display: flex; align-items: center; height: 29px; margin: 0 7px 0 6px; border: 2px solid #569de5; background: #3d3d3d; flex: none; }
.find input { flex: 1; min-width: 0; padding: 2px 5px 0; color: #f0f0f0; }
.find button { width: 18px; height: 18px; margin-right: 3px; }
.arrange { display: flex; align-items: center; gap: 7px; margin: 13px 0 4px 11px; color: #f0f0f0; flex: none; }
.arrange .caret { background: #fff; width: 9px; }
.result { flex: 1; display: flex; }
.result p { flex: 1; margin: 39px 0 0; padding-left: 48px; white-space: nowrap; color: #f0f0f0; }
.pscroll { width: 26px; background: #2e2e2e; display: flex; flex-direction: column; justify-content: space-between; }
.pscroll span { height: 26px; background: #333; display: grid; place-items: center; }
.pscroll .tri { background: #777; }
.dock { display: flex; flex: none; margin-top: -2px; height: 34px; }
.dock button { padding: 3px 9px 0; color: #adadad; }
.dock .on { background: #1f1f1f; border: 2px solid #3d3d3d; border-top-color: #1f1f1f; color: #fff; padding: 2px 7px 0; }

.status { display: flex; align-items: center; height: 37px; background: #424242; color: #f0f0f0; flex: none; padding: 2px 22px 0 1px; }
.status .msg { width: 26px; height: 26px; }
.ready { margin-left: 11px; margin-right: auto; }
.status button { display: flex; align-items: center; gap: 9px; position: relative; }
.status button svg { width: 24px; height: 24px; }
.git { margin-right: 34px; }
.edits { margin-right: 36px; }
.status .branch { gap: 8px; margin-right: 40px; }
.status .repo { gap: 11px; margin-right: 31px; }
.bell span { position: absolute; left: 13px; top: 8px; width: 18px; height: 18px; border-radius: 50%; background: #ff99a4; color: #000; font-size: 13px; line-height: 18px; text-align: center; }

/* designer surface: objects sit at their own design coordinates */
.artboard { position: absolute; left: 491px; top: 95px; width: 641px; height: 560px; background: #000; color: #111; font-size: 9px; line-height: 12px; }
.artboard > * { position: absolute; white-space: nowrap; }
.art-title { left: 1px; right: 2px; top: 1px; height: 13px; padding-left: 11px; background: #424242; color: #fff; display: flex; justify-content: space-between; line-height: 13px; }
.boxes { display: flex; gap: 2px; padding: 1px 1px 0 0; }
.boxes i { width: 8px; height: 9px; background: #1f1f1f; }
.art-page { left: 2px; right: 2px; top: 14px; bottom: 2px; background: #fff; border-radius: 14px; }
.crest { left: 20px; top: 27px; width: 26px; height: 24px; }
.welcome { left: 53px; top: 41px; font-size: 6px; color: #666; }
.artboard .logout { left: 533px; top: 28px; width: 54px; height: 15px; border: 1px solid #888; line-height: 12px; }
.chip { top: 114px; height: 16px; line-height: 14px; padding: 0 5px; border: 1px solid #d8d8d8; border-bottom: 0; background: #e9e9e9; }
.chip.first { left: 78px; width: 36px; background: #fff; }
.chip.appoint { left: 200px; width: 65px; }
.chip.medicine { left: 341px; background: #fff; border-color: #fff; }
.chip.students { left: 441px; width: 65px; padding: 0 14px; }
.card { top: 158px; width: 105px; height: 41px; background: #efefef; padding-top: 5px; }
.c1 { left: 52px; padding-left: 7px; }
.c2 { left: 197px; padding-left: 16px; }
.c3 { left: 340px; padding-left: 21px; }
.c4 { left: 484px; padding-left: 21px; }
.section { display: flex; align-items: center; gap: 1px; top: 228px; }
.recent { left: 38px; font-size: 10px; }
.recent svg { width: 12px; height: 10px; }
.alert { left: 328px; color: #f05a5a; }
.alert svg { width: 9px; height: 10px; }
.adorner { left: -30px; top: 0; width: 700px; height: 300px; overflow: visible; pointer-events: none; }
.star, .margin { color: #6495ed; font-size: 16px; background: #fff; }
.star { width: 23px; height: 19px; top: 114px; line-height: 17px; padding-left: 3px; }
.s1 { left: 92px; }
.s2 { left: 236px; }
.s3 { left: 380px; }
.s4 { left: 524px; }
.margin { height: 24px; line-height: 26px; top: 165px; }
.ml { left: -15px; width: 29px; padding-left: 4px; }
.mr { left: 197px; width: 25px; padding-left: 3px; }
.margin.vert { writing-mode: vertical-rl; height: auto; line-height: 16px; left: 95px; background: none; }
.margin.mt { top: 88px; }
.margin.mb { top: 247px; }
.artboard .hint { left: 108px; top: 109px; width: 48px; height: 33px; background: #e8eefc; border: 1px solid #a3b3de; }
.hint svg { width: 46px; height: 31px; }
</style>
